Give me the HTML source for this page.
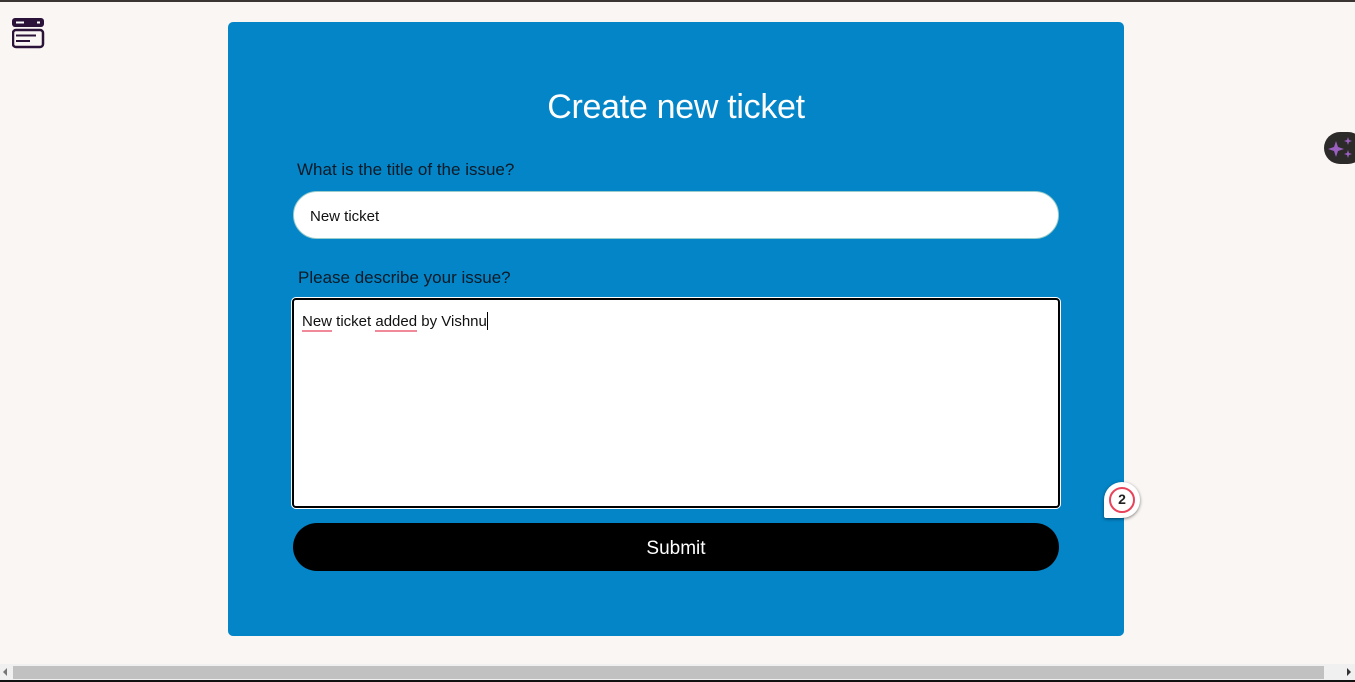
<!DOCTYPE html>
<html><head><style>
*{box-sizing:border-box;margin:0;padding:0}
body{width:1355px;height:682px;background:#faf6f3;position:relative;overflow:hidden;font-family:"Liberation Sans",sans-serif}
.top{position:absolute;left:0;top:0;width:1355px;height:2px;background:#3a3433}
.card{position:absolute;left:228px;top:22px;width:896px;height:614px;background:#0485c7;border-radius:5px}
h1{position:absolute;left:0;width:896px;top:66px;text-align:center;color:#fff;font-weight:normal;font-size:34px;letter-spacing:-0.3px}
.lbl{position:absolute;font-size:17px;color:#0b1a26}
.in{position:absolute;left:293px;top:191px;width:766px;height:48px;background:#fff;border-radius:24px;border:1px solid #9cc;font-size:15px;padding:16px 0 0 16px;color:#111}
.ta{position:absolute;left:292px;top:298px;width:768px;height:210px;background:#fff;border:2px solid #000;border-radius:4px;box-shadow:0 0 0 1px #fff;font-size:15px;padding:12px 8px;color:#111}
.ta u{text-decoration:none;border-bottom:2px solid #f08a9a}
.cur{display:inline-block;width:1px;height:18px;background:#000;vertical-align:-4px}
.btn{position:absolute;left:293px;top:523px;width:766px;height:48px;background:#000;border-radius:24px;color:#fff;font-size:19px;text-align:center;line-height:52px}
.sb{position:absolute;left:0;top:664px;width:1355px;height:16px;background:#f0f0f0}
.sbt{position:absolute;left:13px;top:666px;width:1311px;height:13px;background:#c1c1c1}
.bot{position:absolute;left:0;top:680px;width:1355px;height:2px;background:#111}
</style></head><body>
<div class="top"></div>
<svg style="position:absolute;left:12px;top:17px" width="33" height="32" viewBox="0 0 33 32">
<rect x="0" y="1" width="32" height="9" rx="3" fill="#2a1238"/>
<rect x="4" y="4.5" width="8" height="2" fill="#fff"/><rect x="25" y="4.5" width="3" height="2" fill="#fff"/>
<rect x="1" y="13" width="30" height="17" rx="3" fill="none" stroke="#2a1238" stroke-width="2.5"/>
<rect x="4" y="17.5" width="20" height="2" fill="#2a1238"/><rect x="4" y="23" width="14" height="2" fill="#2a1238"/>
</svg>
<div class="card"><h1>Create new ticket</h1></div>
<div class="lbl" style="left:297px;top:160px">What is the title of the issue?</div>
<div class="in">New ticket</div>
<div class="lbl" style="left:298px;top:268px">Please describe your issue?</div>
<div class="ta"><u>New</u> ticket <u>added</u> by Vishnu<span class="cur"></span></div>
<div class="btn">Submit</div>
<div style="position:absolute;left:1324px;top:132px;width:40px;height:32px;border-radius:16px;background:#2d2a2a"></div>
<svg style="position:absolute;left:1328px;top:137px" width="26" height="24" viewBox="0 0 26 24"><path d="M8 4 L10 10 L16 12 L10 14 L8 20 L6 14 L0 12 L6 10Z M20 0 L21 3 L24 4 L21 5 L20 8 L19 5 L16 4 L19 3Z M20 13 L21 16 L24 17 L21 18 L20 21 L19 18 L16 17 L19 16Z" fill="#9b5fc0"/></svg>
<div style="position:absolute;left:1104px;top:482px;width:36px;height:36px;border-radius:18px 18px 18px 2px;background:#fff;box-shadow:0 1px 3px rgba(0,0,0,.5)"></div>
<div style="position:absolute;left:1109px;top:487px;width:26px;height:26px;border-radius:50%;border:2.5px solid #e8435a;text-align:center;font-weight:bold;font-size:14px;line-height:21px;color:#222">2</div>
<div class="sb"></div><div class="sbt"></div>
<div style="position:absolute;left:3px;top:668px;border:4px solid transparent;border-right:4px solid #777;border-left:0"></div>
<div style="position:absolute;left:1347px;top:668px;border:4px solid transparent;border-left:4px solid #333;border-right:0"></div>
<div class="bot"></div>
</body></html>
